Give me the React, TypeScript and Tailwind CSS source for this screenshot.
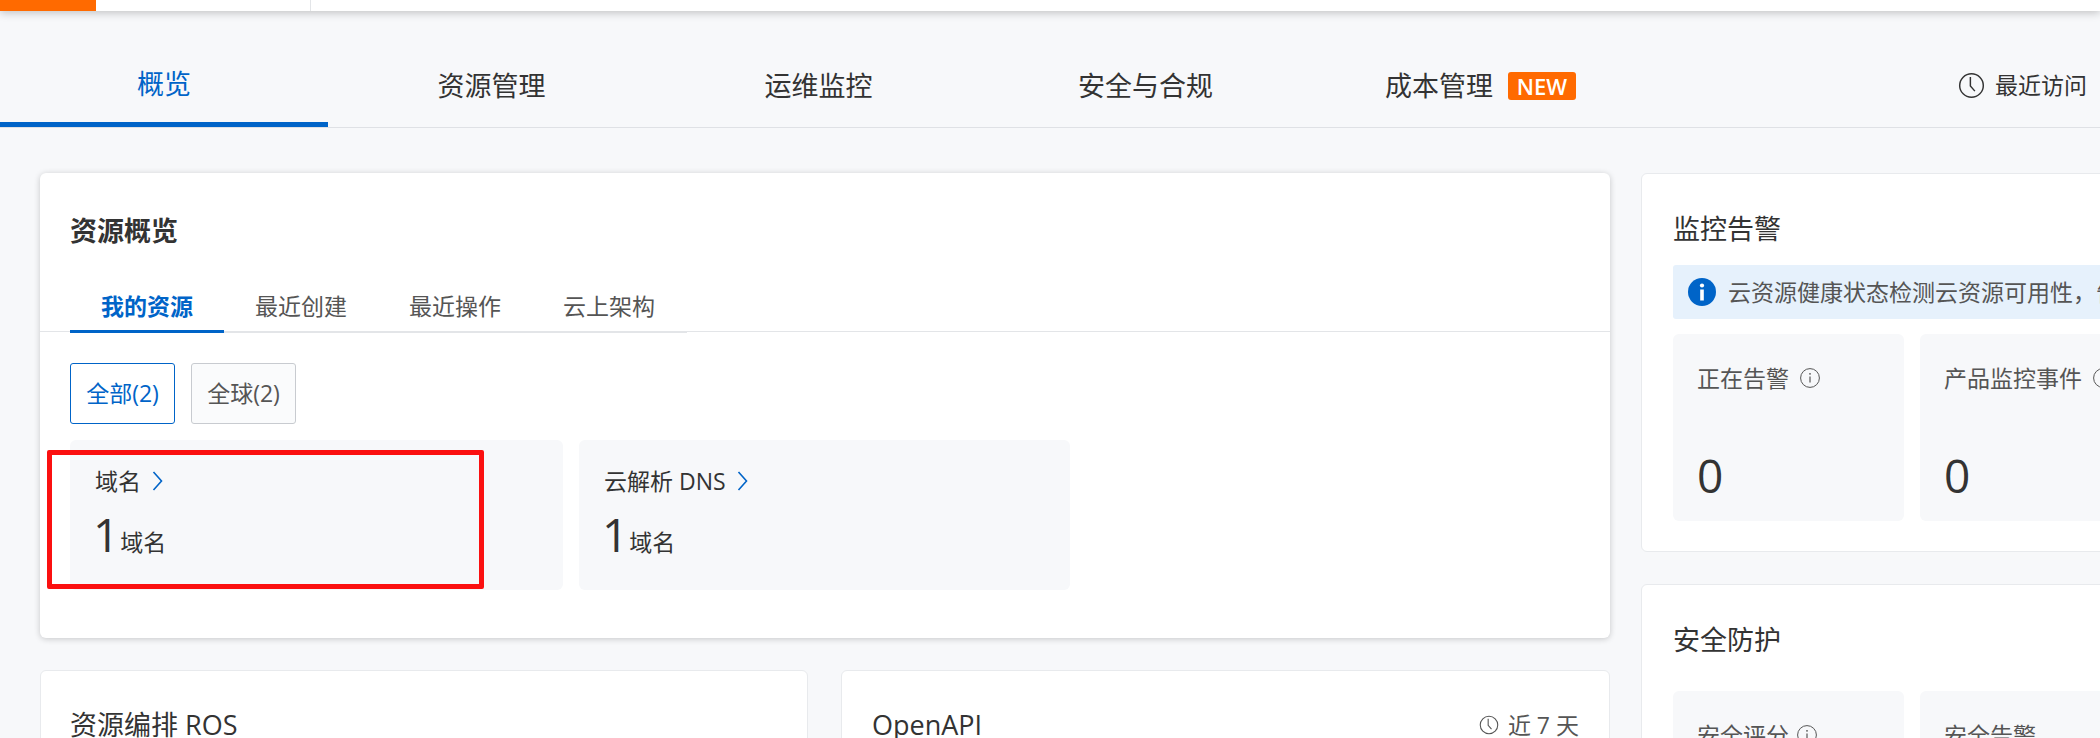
const CJK = "font-['Open_Sans','Noto_Sans_CJK_SC',sans-serif]";

function ClockIcon({ className }: { className: string }) {
  return (
    <svg viewBox="0 0 24 24" fill="none" stroke="currentColor" strokeWidth="1.3" className={className}>
      <circle cx="12" cy="12" r="10.5" />
      <path d="M11 4.5V12.5L15 17" />
    </svg>
  );
}

function InfoOutline({ className }: { className: string }) {
  return (
    <svg viewBox="0 0 20 20" fill="none" stroke="#555" strokeWidth="1" className={className}>
      <circle cx="10" cy="10" r="9.4" />
      <path d="M10 8.5V14.5" strokeWidth="1.2" />
      <circle cx="10" cy="5.8" r="0.9" fill="#555" stroke="none" />
    </svg>
  );
}

function InfoFilled({ className }: { className: string }) {
  return (
    <svg viewBox="0 0 28 28" className={className}>
      <circle cx="14" cy="14" r="14" fill="#0064c8" />
      <circle cx="14" cy="7.5" r="2.1" fill="#fff" />
      <rect x="12.2" y="11.5" width="3.6" height="11" fill="#fff" />
    </svg>
  );
}

function Chevron({ className }: { className: string }) {
  return (
    <svg viewBox="0 0 11 20" fill="none" stroke="#0064c8" strokeWidth="1.6" className={className}>
      <path d="M1.5 1L9.5 10L1.5 19" />
    </svg>
  );
}

function NavTab({ label, active, className = "", children }: { label: string; active?: boolean; className?: string; children?: React.ReactNode }) {
  return (
    <div
      className={`flex h-[83px] items-center justify-center gap-[15px] text-[27px] leading-none ${className} ${
        active ? "w-[328px] border-b-[5px] border-[#0064c8] text-[#0064c8]" : "w-[327px] text-[#333]"
      }`}
    >
      {label}
      {children}
    </div>
  );
}

function ResourceCard({ name, width }: { name: string; width: string }) {
  return (
    <div className={`h-[150px] rounded-md bg-[#f7f8fa] pl-[25px] pt-[28px] ${width}`}>
      <div className="flex h-[26px] items-center gap-[11px] text-[23px] leading-none text-[#333]">
        {name}
        <Chevron className="h-[20px] w-[11px]" />
      </div>
      <div className="mt-[15px] flex items-end text-[#333]">
        <span className="-ml-[2px] text-[46px] font-medium leading-[50px]">1</span>
        <span className="mb-[2px] ml-[1px] text-[23px] leading-[30px]">域名</span>
      </div>
    </div>
  );
}

function StatCard({ label, value, icon = true, gap = "gap-[11px]" }: { label: string; value?: string; icon?: boolean; gap?: string }) {
  return (
    <div className="h-[187px] w-[231px] shrink-0 rounded-md bg-[#f7f8fa] pl-[24px] pt-[30px]">
      <div className={`flex h-[28px] items-center whitespace-nowrap text-[23px] leading-none text-[#555] ${gap}`}>
        {label}
        {icon && <InfoOutline className="h-[20px] w-[20px] shrink-0" />}
      </div>
      {value && <div className="mt-[58px] text-[46px] leading-[50px] text-[#333]">{value}</div>}
    </div>
  );
}

export default function App() {
  return (
    <div className={`h-[738px] w-[2100px] overflow-hidden bg-[#f7f8fa] ${CJK}`}>
      {/* top bar */}
      <div className="flex h-[11px] bg-white shadow-[0_2px_8px_rgba(0,0,0,0.22)]">
        <div className="h-full w-[96px] bg-[#ff6a00]" />
        <div className="ml-[214px] h-full w-px bg-[#e3e5e8]" />
      </div>

      {/* nav tabs */}
      <div className="mt-[33px] flex h-[84px] items-start border-b border-[#dfe1e5]">
        <NavTab label="概览" active />
        <NavTab label="资源管理" />
        <NavTab label="运维监控" />
        <NavTab label="安全与合规" />
        <NavTab label="成本管理" className="pl-[16px]">
          <span className="flex h-[28px] w-[68px] items-center justify-center rounded-[3px] bg-[#ff6a00] text-[22px] font-semibold leading-none text-white">
            NEW
          </span>
        </NavTab>
        <div className="ml-auto flex h-[83px] items-center gap-[10px] pr-[13px] text-[23px] leading-none text-[#333]">
          <ClockIcon className="h-[27px] w-[27px]" />
          最近访问
        </div>
      </div>

      {/* main */}
      <div className="mt-[45px] flex gap-[31px] pl-[40px]">
        <div className="flex w-[1570px] shrink-0 flex-col gap-[32px]">
          <div className="relative h-[465px] rounded-md bg-white shadow-[0_1px_6px_rgba(0,0,0,0.2)]">
            <div className="pl-[30px] pt-[40px] text-[27px] font-bold leading-[36px] text-[#333]">资源概览</div>

            <div className="mt-[35px] h-[48px] border-b border-[#e3e5e8]">
              <div className="ml-[30px] flex h-[48px] w-[617px] translate-y-px border-b-2 border-[#e3e5e8] text-[23px] leading-none text-[#555]">
                <div className="-mb-[2px] flex w-[154px] items-center justify-center border-b-[3px] border-[#0064c8] pb-[3px] font-bold text-[#0064c8]">
                  我的资源
                </div>
                <div className="flex w-[154px] items-center justify-center pb-[4px]">最近创建</div>
                <div className="flex w-[154px] items-center justify-center pb-[4px]">最近操作</div>
                <div className="flex w-[154px] items-center justify-center pb-[4px]">云上架构</div>
              </div>
            </div>

            <div className="ml-[30px] mt-[31px] flex gap-[16px]">
              <div className="flex h-[61px] w-[105px] items-center justify-center rounded-[3px] border border-[#0064c8] text-[23px] leading-none text-[#0064c8]">
                全部(2)
              </div>
              <div className="flex h-[61px] w-[105px] items-center justify-center rounded-[3px] border border-[#c8cbd0] bg-[#fafbfc] text-[23px] leading-none text-[#555]">
                全球(2)
              </div>
            </div>

            <div className="ml-[30px] mt-[16px] flex gap-[16px]">
              <ResourceCard name="域名" width="w-[493px]" />
              <ResourceCard name="云解析 DNS" width="w-[491px]" />
            </div>

            {/* red annotation box */}
            <div className="absolute left-[7px] top-[277px] h-[139px] w-[437px] rounded-[2px] border-[5px] border-[#fb1010]" />
          </div>

          <div className="flex gap-[33px]">
            <div className="h-[200px] w-[768px] shrink-0 rounded-md border border-[#e8eaed] bg-white pl-[29px] pt-[36px] text-[27px] leading-[36px] text-[#333]">
              资源编排 ROS
            </div>
            <div className="flex h-[200px] w-[769px] shrink-0 justify-between rounded-md border border-[#e8eaed] bg-white pl-[30px] pr-[30px] pt-[36px]">
              <span className="text-[27px] leading-[36px] text-[#333]">OpenAPI</span>
              <span className="flex h-[36px] items-center gap-[9px] text-[23px] leading-none text-[#555]">
                <ClockIcon className="h-[20px] w-[20px]" />
                近 7 天
              </span>
            </div>
          </div>
        </div>

        <div className="flex w-[600px] shrink-0 flex-col gap-[32px]">
          <div className="h-[379px] rounded-md border border-[#e8eaed] bg-white pl-[31px] pt-[37px]">
            <div className="text-[27px] leading-[36px] text-[#333]">监控告警</div>
            <div className="mt-[18px] flex h-[54px] items-center gap-[12px] rounded-[3px] bg-[#e6f1fc] pl-[15px] text-[23px] leading-none text-[#555]">
              <InfoFilled className="h-[28px] w-[28px] shrink-0" />
              <span className="whitespace-nowrap">云资源健康状态检测云资源可用性，告警</span>
            </div>
            <div className="mt-[15px] flex gap-[16px]">
              <StatCard label="正在告警" value="0" />
              <StatCard label="产品监控事件" value="0" />
            </div>
          </div>

          <div className="h-[200px] rounded-md border border-[#e8eaed] bg-white pl-[31px] pt-[37px]">
            <div className="text-[27px] leading-[36px] text-[#333]">安全防护</div>
            <div className="mt-[33px] flex gap-[16px]">
              <StatCard label="安全评分" gap="gap-[8px]" />
              <StatCard label="安全告警" icon={false} />
            </div>
          </div>
        </div>
      </div>
    </div>
  );
}
